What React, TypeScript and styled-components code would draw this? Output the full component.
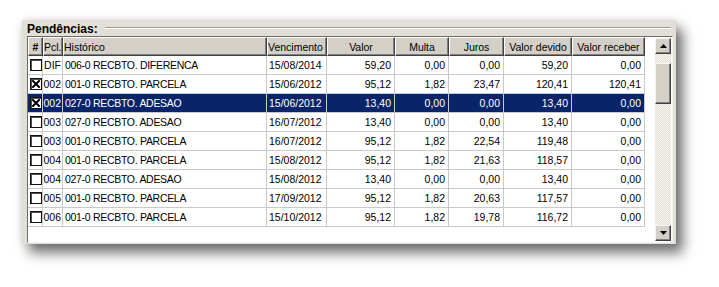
import React from "react";
import styled, { createGlobalStyle } from "styled-components";

const Global = createGlobalStyle`
  html, body { margin: 0; padding: 0; background: #ffffff; }
  body { font-family: "Liberation Sans", Arial, sans-serif; }
`;

const Page = styled.div`
  padding: 20px 0 0 22px;
  width: 719px;
  height: 287px;
  box-sizing: border-box;
`;

const Panel = styled.div`
  width: 654px;
  height: 224px;
  box-sizing: border-box;
  background: #e2dfd8;
  padding: 0 3px 0 5px;
  display: flex;
  flex-direction: column;
  box-shadow: 7px 9px 12px rgba(0, 0, 0, 0.55), 0 0 8px rgba(0, 0, 0, 0.12);
`;

const TitleRow = styled.div`
  height: 16px;
  display: flex;
  align-items: center;
  gap: 7px;
`;

const Title = styled.span`
  font-weight: bold;
  font-size: 12px;
  color: #000;
  margin-top: 2px;
`;

const Groove = styled.div`
  flex: 1;
  height: 0;
  border-top: 1px solid #a09d96;
  border-bottom: 1px solid #ffffff;
  margin-top: 0;
  margin-right: 2px;
`;

const ListBox = styled.div`
  height: 207px;
  box-sizing: border-box;
  background: #ffffff;
  border-style: solid;
  border-width: 1px;
  border-color: #6e6c68 #f4f3ef #f4f3ef #6e6c68;
  display: flex;
  overflow: hidden;
`;

const GridArea = styled.div`
  flex: 1;
`;

const COLS = "15px 20px 204px 60px 68px 54px 55px 68px 73px";

const Row = styled.div<{ $selected?: boolean }>`
  display: grid;
  grid-template-columns: ${COLS};
  width: 617px;
  height: 19px;
  background: ${(p) => (p.$selected ? "#0a246a" : "#ffffff")};
  color: ${(p) => (p.$selected ? "#ffffff" : "#000000")};
`;

const HeaderRow = styled.div`
  display: grid;
  grid-template-columns: ${COLS};
  width: 617px;
  height: 19px;
`;

const HeadCell = styled.div<{ $align: string; $bold?: boolean }>`
  box-sizing: border-box;
  background: #d4d0c8;
  border-style: solid;
  border-width: 1px;
  border-color: #ffffff #404040 #404040 #ffffff;
  box-shadow: inset -1px -1px 0 #808080;
  font-size: 10.5px;
  font-weight: ${(p) => (p.$bold ? "bold" : "normal")};
  color: #000;
  display: flex;
  align-items: center;
  justify-content: ${(p) => p.$align};
  padding: 0;
  white-space: nowrap;
  overflow: hidden;
`;

const Cell = styled.div<{ $align: string; $pad: string; $tight?: boolean }>`
  box-sizing: border-box;
  border-right: 1px solid #c9c9c9;
  border-bottom: 1px solid #c9c9c9;
  font-size: 10.5px;
  letter-spacing: ${(p) => (p.$tight ? "-0.3px" : "0")};
  display: flex;
  align-items: center;
  justify-content: ${(p) => p.$align};
  padding: ${(p) => p.$pad};
  white-space: nowrap;
  overflow: hidden;
`;

const Check = styled.div`
  width: 12px;
  height: 12px;
  box-sizing: border-box;
  border: 1px solid #111;
  box-shadow: inset 1px 1px 0 #505050;
  background: #ffffff;
  display: flex;
  align-items: center;
  justify-content: center;
`;

const Scrollbar = styled.div`
  width: 16px;
  margin: 1px 1px 1px 10px;
  display: flex;
  flex-direction: column;
  background: repeating-conic-gradient(#f4f3ee 0% 25%, #e4e2db 0% 50%) 0 0 / 2px 2px;
`;

const ScrollButton = styled.div`
  width: 16px;
  height: 16px;
  box-sizing: border-box;
  background: #d4d0c8;
  border-style: solid;
  border-width: 1px;
  border-color: #f4f3ef #404040 #404040 #f4f3ef;
  box-shadow: inset -1px -1px 0 #808080;
  display: flex;
  align-items: center;
  justify-content: center;
`;

const Track = styled.div`
  flex: 1;
  padding-top: 9px;
`;

const Thumb = styled.div`
  width: 16px;
  height: 41px;
  box-sizing: border-box;
  background: #d4d0c8;
  border-style: solid;
  border-width: 1px;
  border-color: #f4f3ef #404040 #404040 #f4f3ef;
  box-shadow: inset -1px -1px 0 #808080;
`;

type Col = { label: string; align: string; head: string; pad: string; tight?: boolean };
const columns: Col[] = [
  { label: "#", align: "flex-start", head: "center", pad: "0 0 0 2px" },
  { label: "Pcl.", align: "flex-end", head: "flex-start", pad: "0 1px 0 0" },
  { label: "Histórico", align: "flex-start", head: "flex-start", pad: "0 0 0 2px", tight: true },
  { label: "Vencimento", align: "flex-start", head: "flex-start", pad: "0 0 0 2px" },
  { label: "Valor", align: "flex-end", head: "center", pad: "0 3px 0 0" },
  { label: "Multa", align: "flex-end", head: "center", pad: "0 3px 0 0" },
  { label: "Juros", align: "flex-end", head: "center", pad: "0 3px 0 0" },
  { label: "Valor devido", align: "flex-end", head: "center", pad: "0 3px 0 0" },
  { label: "Valor receber", align: "flex-end", head: "center", pad: "0 3px 0 0" },
];

type Rec = { checked: boolean; selected?: boolean; cells: string[] };
const rows: Rec[] = [
  { checked: false, cells: ["DIF", "006-0 RECBTO. DIFERENCA", "15/08/2014", "59,20", "0,00", "0,00", "59,20", "0,00"] },
  { checked: true, cells: ["002", "001-0 RECBTO. PARCELA", "15/06/2012", "95,12", "1,82", "23,47", "120,41", "120,41"] },
  { checked: true, selected: true, cells: ["002", "027-0 RECBTO. ADESAO", "15/06/2012", "13,40", "0,00", "0,00", "13,40", "0,00"] },
  { checked: false, cells: ["003", "027-0 RECBTO. ADESAO", "16/07/2012", "13,40", "0,00", "0,00", "13,40", "0,00"] },
  { checked: false, cells: ["003", "001-0 RECBTO. PARCELA", "16/07/2012", "95,12", "1,82", "22,54", "119,48", "0,00"] },
  { checked: false, cells: ["004", "001-0 RECBTO. PARCELA", "15/08/2012", "95,12", "1,82", "21,63", "118,57", "0,00"] },
  { checked: false, cells: ["004", "027-0 RECBTO. ADESAO", "15/08/2012", "13,40", "0,00", "0,00", "13,40", "0,00"] },
  { checked: false, cells: ["005", "001-0 RECBTO. PARCELA", "17/09/2012", "95,12", "1,82", "20,63", "117,57", "0,00"] },
  { checked: false, cells: ["006", "001-0 RECBTO. PARCELA", "15/10/2012", "95,12", "1,82", "19,78", "116,72", "0,00"] },
];

const CheckMark = () => (
  <svg width="8" height="8" viewBox="0 0 8 8">
    <path d="M1 1 L7 7 M7 1 L1 7" stroke="#000" strokeWidth="2" strokeLinecap="square" />
  </svg>
);

const Arrow = ({ up }: { up: boolean }) => (
  <svg width="7" height="4" viewBox="0 0 7 4">
    <path d={up ? "M3.5 0 L7 4 L0 4 Z" : "M0 0 L7 0 L3.5 4 Z"} fill="#000" />
  </svg>
);

export default function App() {
  return (
    <>
      <Global />
      <Page>
        <Panel>
          <TitleRow>
            <Title>Pendências:</Title>
            <Groove />
          </TitleRow>
          <ListBox>
            <GridArea>
              <HeaderRow>
                {columns.map((c) => (
                  <HeadCell key={c.label} $align={c.head} $bold={c.label === "#"}>
                    {c.label}
                  </HeadCell>
                ))}
              </HeaderRow>
              {rows.map((r, i) => (
                <Row key={i} $selected={r.selected}>
                  <Cell $align="flex-start" $pad={columns[0].pad}>
                    <Check>{r.checked && <CheckMark />}</Check>
                  </Cell>
                  {r.cells.map((v, j) => {
                    const c = columns[j + 1];
                    return (
                      <Cell key={j} $align={c.align} $pad={c.pad} $tight={c.tight}>
                        {v}
                      </Cell>
                    );
                  })}
                </Row>
              ))}
            </GridArea>
            <Scrollbar>
              <ScrollButton>
                <Arrow up />
              </ScrollButton>
              <Track>
                <Thumb />
              </Track>
              <ScrollButton>
                <Arrow up={false} />
              </ScrollButton>
            </Scrollbar>
          </ListBox>
        </Panel>
      </Page>
    </>
  );
}
